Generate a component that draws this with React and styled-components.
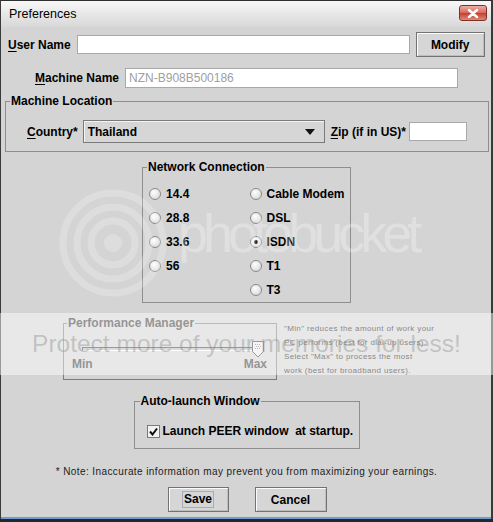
import React from 'react';
import styled, { createGlobalStyle } from 'styled-components';

const GlobalStyle = createGlobalStyle`
  html, body {
    margin: 0;
    padding: 0;
    background: #1f2731;
  }
  body {
    font-family: "Liberation Sans", Arial, sans-serif;
  }
`;

const Frame = styled.div`
  position: relative;
  width: 493px;
  height: 519px;
  display: flex;
  flex-direction: column;
  background: #d4d4d4;
  box-shadow: inset 1px 0 0 #3a3a3a, inset -2px 0 0 #3a3a3a, inset 0 -2px 0 #6f9ccd;
  overflow: hidden;
  color: #000;
`;

const TitleBar = styled.div`
  height: 27px;
  display: flex;
  align-items: center;
  padding-left: 8px;
  box-sizing: border-box;
  border-top: 1px solid #2e2e2e;
  border-left: 1px solid #3a3a3a;
  border-right: 2px solid #3a3a3a;
  background: linear-gradient(#f8f8f8, #e6e6e6 55%, #d8d8d8);
  font-size: 12.5px;
`;

const CloseButton = styled.div`
  align-self: flex-start;
  margin: 4px 4px 0 auto;
  width: 28px;
  height: 16px;
  box-sizing: border-box;
  border: 1px solid #7d3127;
  border-radius: 3px;
  background: linear-gradient(#eeb0a4, #d8695a 48%, #c4402f 52%, #dc8a78);
  display: flex;
  align-items: center;
  justify-content: center;
`;

const Body = styled.div`
  flex: 1;
  display: flex;
  flex-direction: column;
`;

const Row = styled.div`
  display: flex;
  align-items: center;
  height: ${p => p.$h || 20}px;
  margin-top: ${p => p.$top || 0}px;
  padding-left: ${p => p.$left || 0}px;
`;

const Label = styled.span`
  font-weight: bold;
  font-size: 12px;
  white-space: pre;
  margin-left: ${p => p.$ml || 0}px;
  u {
    text-decoration: underline;
    text-underline-offset: 2px;
  }
`;

const Field = styled.div`
  width: ${p => p.$w}px;
  height: ${p => p.$h || 19}px;
  margin-left: ${p => p.$ml || 6}px;
  box-sizing: border-box;
  border: 1px solid #a9a9a9;
  background: #fff;
  color: #a0a0a0;
  font-size: 12px;
  padding-left: 3px;
  display: flex;
  align-items: center;
`;

const Button = styled.div`
  width: ${p => p.$w}px;
  height: 25px;
  margin-left: ${p => p.$ml || 0}px;
  box-sizing: border-box;
  border: 1px solid #737373;
  box-shadow: inset 1px 1px 0 #fbfbfb, inset -1px -1px 0 #bdbdbd;
  background: #d6d6d6;
  font-weight: bold;
  font-size: 12px;
  display: flex;
  align-items: center;
  justify-content: center;
`;

const Focus = styled.span`
  border: 1px solid #a2aebd;
  padding: 1px 1px;
  line-height: 13px;
`;

const Group = styled.div`
  position: relative;
  border: 1px solid ${p => (p.$dim ? '#7b7b7b' : '#8e8e8e')};
`;

const Legend = styled.span`
  position: absolute;
  top: -8px;
  left: ${p => p.$left || 4}px;
  padding: 0 1px;
  background: #d4d4d4;
  font-weight: bold;
  font-size: 12px;
  line-height: 15px;
  color: ${p => p.$color || '#000'};
`;

const LocationGroup = styled(Group)`
  margin: 13px 4px 0 5px;
  padding: 18px 0 8px 21px;
`;

const Select = styled.div`
  width: 242px;
  height: 23px;
  margin-left: 5px;
  box-sizing: border-box;
  border: 1px solid #7a7a7a;
  box-shadow: inset 1px 1px 0 #f4f4f4;
  background: #d6d6d6;
  display: flex;
  align-items: center;
  padding-left: 4px;
  font-weight: bold;
  font-size: 12px;
`;

const Arrow = styled.span`
  margin-left: auto;
  margin-right: 9px;
  width: 0;
  height: 0;
  border-left: 5px solid transparent;
  border-right: 5px solid transparent;
  border-top: 6px solid #111;
`;

const NetworkGroup = styled(Group)`
  align-self: center;
  width: 209px;
  box-sizing: border-box;
  margin-top: 15px;
  padding: 14px 0 0 6px;
  display: flex;
`;

const RadioColumn = styled.div`
  width: 102px;
  display: flex;
  flex-direction: column;
`;

const RadioItem = styled.div`
  height: 24px;
  display: flex;
  align-items: center;
  gap: 5px;
  font-weight: bold;
  font-size: 12px;
`;

const RadioDot = styled.span`
  width: 12px;
  height: 12px;
  box-sizing: border-box;
  border-radius: 50%;
  border: 1px solid #8a8a8a;
  background: radial-gradient(circle at 40% 35%, #ffffff, #dedede 70%);
  display: flex;
  align-items: center;
  justify-content: center;
  &::after {
    content: '';
    width: 4px;
    height: 4px;
    border-radius: 50%;
    background: ${p => (p.$on ? '#2a2a2a' : 'transparent')};
  }
`;

const PerfRow = styled.div`
  display: flex;
  align-items: flex-start;
  margin: 20px 0 0 63px;
`;

const PerfGroup = styled(Group)`
  width: 214px;
  box-sizing: border-box;
  padding: 17px 9px 8px 18px;
`;

const Slider = styled.div`
  position: relative;
  height: 16px;
  padding-top: 6px;
  box-sizing: border-box;
`;

const Track = styled.div`
  width: 176px;
  height: 4px;
  box-sizing: border-box;
  border-top: 1px solid #3c3c3c;
  border-left: 1px solid #3c3c3c;
  border-bottom: 1px solid #fff;
  border-right: 1px solid #fff;
  background: #bcbcbc;
`;

const Thumb = styled.svg`
  position: absolute;
  top: 0;
  right: 3px;
`;

const Ticks = styled.div`
  display: flex;
  justify-content: space-between;
  margin-left: -10px;
  height: 14px;
  align-items: center;
  font-weight: bold;
  font-size: 12px;
  color: #333;
`;

const Help = styled.div`
  margin: -1px 0 0 7px;
  font-size: 8px;
  letter-spacing: 0.35px;
  line-height: 13.5px;
  color: #111;
  p {
    margin: 0 0 1px;
  }
`;

const AutoGroup = styled(Group)`
  align-self: center;
  width: 226px;
  box-sizing: border-box;
  margin-top: 21px;
  padding: 22px 0 10px 12px;
`;

const CheckRow = styled.div`
  display: flex;
  align-items: center;
  gap: 3px;
  height: 14px;
`;

const CheckBox = styled.span`
  width: 13px;
  height: 13px;
  box-sizing: border-box;
  border: 1px solid #7a7a7a;
  background: #f2f2f2;
  display: flex;
  align-items: center;
  justify-content: center;
`;

const Note = styled.div`
  margin-top: 16px;
  text-align: center;
  font-size: 10px;
  letter-spacing: 0.4px;
  line-height: 14px;
  color: #1c1c1c;
`;

const ButtonRow = styled.div`
  display: flex;
  justify-content: center;
  gap: 26px;
  margin-top: 8px;
  padding-left: 1px;
`;

const Band = styled.div`
  position: absolute;
  left: 0;
  right: 0;
  top: 313px;
  height: 62px;
  background: rgba(255, 255, 255, 0.48);
  display: flex;
  align-items: center;
  justify-content: center;
  font-size: 24.5px;
  color: rgba(140, 140, 140, 0.42);
  pointer-events: none;
`;

const BucketMark = styled.div`
  position: absolute;
  left: 178px;
  top: 206px;
  font-size: 54px;
  line-height: 54px;
  letter-spacing: -5px;
  color: rgba(255, 255, 255, 0.28);
  pointer-events: none;
`;

const Rings = styled.svg`
  position: absolute;
  left: 55px;
  top: 185px;
  pointer-events: none;
`;

const CloseGlyph = () => (
  <svg width="12" height="9" viewBox="0 0 12 9">
    <path d="M2 1 L10 8 M10 1 L2 8" stroke="#fff" strokeWidth="2.4" strokeLinecap="round" />
  </svg>
);

const Check = () => (
  <svg width="9" height="9" viewBox="0 0 9 9">
    <path d="M1 4.5 L3.5 7.5 L8 1.5" stroke="#111" strokeWidth="2" fill="none" />
  </svg>
);

const speeds = [
  ['14.4', '28.8', '33.6', '56'],
  ['Cable Modem', 'DSL', 'ISDN', 'T1', 'T3'],
];

export default function App() {
  return (
    <>
      <GlobalStyle />
      <Frame>
        <TitleBar>
          <span>Preferences</span>
          <CloseButton>
            <CloseGlyph />
          </CloseButton>
        </TitleBar>
        <Body>
          <Row $h={25} $top={5} $left={8}>
            <Label><u>U</u>ser Name</Label>
            <Field $w={333} />
            <Button $w={69} $ml={6}>Modify</Button>
          </Row>
          <Row $h={20} $top={11} $left={35}>
            <Label><u>M</u>achine Name</Label>
            <Field $w={333} $h={20}>NZN-B908B500186</Field>
          </Row>

          <LocationGroup>
            <Legend $left={4}>Machine Location</Legend>
            <Row $h={23}>
              <Label><u>C</u>ountry*</Label>
              <Select>
                Thailand
                <Arrow />
              </Select>
              <Label $ml={6}><u>Z</u>ip (if in US)*</Label>
              <Field $w={58} $ml={3} />
            </Row>
          </LocationGroup>

          <NetworkGroup>
            <Legend $left={4}>Network Connection</Legend>
            {speeds.map((col, i) => (
              <RadioColumn key={i}>
                {col.map(s => (
                  <RadioItem key={s}>
                    <RadioDot $on={s === 'ISDN'} />
                    {s}
                  </RadioItem>
                ))}
              </RadioColumn>
            ))}
          </NetworkGroup>

          <PerfRow>
            <PerfGroup $dim>
              <Legend $left={3} $color="#333">Performance Manager</Legend>
              <Slider>
                <Track />
                <Thumb width="12" height="17" viewBox="0 0 12 17">
                  <polygon points="0.5,0.5 11.5,0.5 11.5,10.5 6,16 0.5,10.5" fill="#ececec" stroke="#3a3a3a" />
                  <g fill="#7a7a7a">
                    <rect x="3" y="3" width="1" height="1" />
                    <rect x="5" y="3" width="1" height="1" />
                    <rect x="7" y="3" width="1" height="1" />
                    <rect x="4" y="5" width="1" height="1" />
                    <rect x="6" y="5" width="1" height="1" />
                    <rect x="8" y="5" width="1" height="1" />
                    <rect x="3" y="7" width="1" height="1" />
                    <rect x="5" y="7" width="1" height="1" />
                    <rect x="7" y="7" width="1" height="1" />
                  </g>
                </Thumb>
              </Slider>
              <Ticks>
                <span>Min</span>
                <span>Max</span>
              </Ticks>
            </PerfGroup>
            <Help>
              <p>"Min" reduces the amount of work your<br />PC performs (best for dial-up users).</p>
              <p>Select "Max" to process the most<br />work (best for broadband users).</p>
            </Help>
          </PerfRow>

          <AutoGroup>
            <Legend $left={5}>Auto-launch Window</Legend>
            <CheckRow>
              <CheckBox>
                <Check />
              </CheckBox>
              <Label>Launch PEER window  at startup.</Label>
            </CheckRow>
          </AutoGroup>

          <Note>* Note: Inaccurate information may prevent you from maximizing your earnings.</Note>

          <ButtonRow>
            <Button $w={61}><Focus>Save</Focus></Button>
            <Button $w={72}>Cancel</Button>
          </ButtonRow>
        </Body>

        <Rings width="120" height="120" viewBox="0 0 120 120">
          <g fill="none" stroke="rgba(255,255,255,0.22)" strokeWidth="7">
            <circle cx="58" cy="58" r="50" />
            <circle cx="58" cy="58" r="36" />
            <circle cx="58" cy="58" r="22" />
          </g>
          <circle cx="58" cy="58" r="9" fill="rgba(255,255,255,0.22)" />
        </Rings>
        <BucketMark>photobucket</BucketMark>
        <Band>Protect more of your memories for less!</Band>
      </Frame>
    </>
  );
}
